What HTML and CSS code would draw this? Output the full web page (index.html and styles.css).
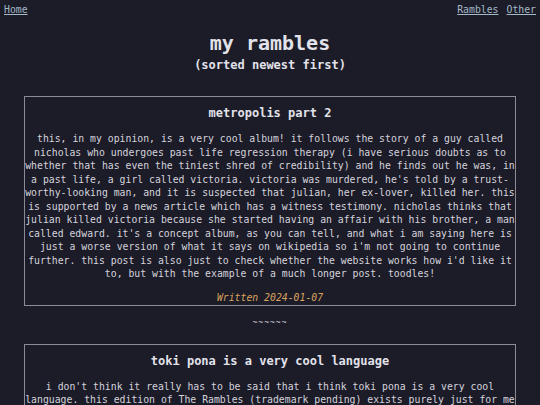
FILE: index.html
```html
<!DOCTYPE html>
<html lang="en">
<head>
<meta charset="utf-8">
<title>my rambles</title>
<link rel="stylesheet" href="styles.css">
</head>
<body>
<nav class="nav">
  <a class="nav-link" href="#">Home</a>
  <div class="nav-right">
    <a class="nav-link" href="#">Rambles</a>
    <a class="nav-link" href="#">Other</a>
  </div>
</nav>
<header class="header">
  <h1 class="title">my rambles</h1>
  <p class="subtitle">(sorted newest first)</p>
</header>
<main class="posts">
  <article class="post">
    <h2 class="post-title">metropolis part 2</h2>
    <p class="post-body">this, in my opinion, is a very cool album! it follows the story of a guy called nicholas who undergoes past life regression therapy (i have serious doubts as to whether that has even the tiniest shred of credibility) and he finds out he was, in a past life, a girl called victoria. victoria was murdered, he's told by a trust-worthy-looking man, and it is suspected that julian, her ex-lover, killed her. this is supported by a news article which has a witness testimony. nicholas thinks that julian killed victoria because she started having an affair with his brother, a man called edward. it's a concept album, as you can tell, and what i am saying here is just a worse version of what it says on wikipedia so i'm not going to continue further. this post is also just to check whether the website works how i'd like it to, but with the example of a much longer post. toodles!</p>
    <p class="post-date">Written 2024-01-07</p>
  </article>
  <div class="separator">~~~~~~</div>
  <article class="post">
    <h2 class="post-title">toki pona is a very cool language</h2>
    <p class="post-body">i don't think it really has to be said that i think toki pona is a very cool language. this edition of The Rambles (trademark pending) exists purely just for me to talk about how much i like it, and to test how the website looks with more than one post on it.</p>
    <p class="post-date">Written 2024-01-06</p>
  </article>
</main>
</body>
</html>
```
FILE: styles.css
```css
html, body {
  margin: 0;
  padding: 0;
}
body {
  background: #1c1b28;
  color: #d4d4dc;
  font-family: "DejaVu Sans Mono", "Liberation Mono", monospace;
  font-size: 9.8px;
  line-height: 13.5px;
  padding: 3px 4px 0;
}
.nav {
  display: flex;
  justify-content: space-between;
  align-items: center;
}
.nav-right {
  display: flex;
  gap: 8px;
}
.nav-link {
  color: #a3b9c7;
  text-decoration: underline;
}
.header {
  text-align: center;
}
.title {
  margin: 14px 0 0;
  font-size: 20px;
  line-height: 24px;
  font-weight: bold;
  color: #e2e2ea;
}
.subtitle {
  margin: 2.5px 0 0;
  font-size: 12px;
  line-height: 16px;
  font-weight: bold;
  color: #e2e2ea;
}
.posts {
  margin: 23px 20px 0;
  display: flex;
  flex-direction: column;
}
.post {
  border: 1px solid #8b8b96;
  padding: 8px 0 0;
  text-align: center;
}
.post-title {
  margin: 0;
  font-size: 12px;
  line-height: 16px;
  font-weight: bold;
  color: #e2e2ea;
}
.post-body {
  margin: 11.25px 0 0;
}
.post-date {
  margin: 10.5px 0 0;
  font-style: italic;
  color: #d9a35e;
}
.separator {
  text-align: center;
  margin: 10.25px 0 14px;
  font-size: 8px;
  letter-spacing: 1px;
}
```
